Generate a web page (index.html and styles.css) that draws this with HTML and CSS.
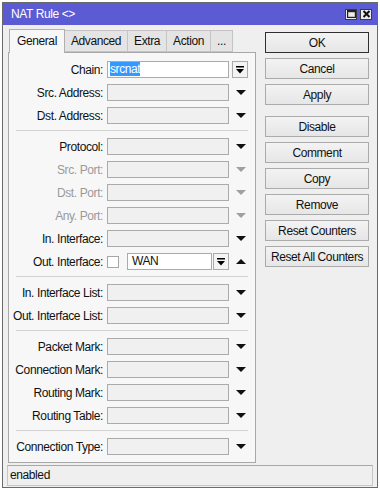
FILE: index.html
```html
<!DOCTYPE html>
<html lang="en">
<head>
  <meta charset="UTF-8" />
  <title>NAT Rule</title>
  <link rel="stylesheet" href="styles.css">
</head>
<body>
  <div class="window">
    <div class="titlebar">
      <span class="title">NAT Rule &lt;&gt;</span>
      <div class="title-btns">
        <span class="tbtn">
          <svg width="9" height="8" viewBox="0 0 9 8"><rect x="0.6" y="0.6" width="7.8" height="6.8" fill="none" stroke="#222" stroke-width="1.2"/><rect x="0.6" y="0.6" width="7.8" height="1.6" fill="#222"/></svg>
        </span>
        <span class="tbtn">
          <svg width="9" height="8" viewBox="0 0 9 8"><path d="M1.5 1 7.5 7M7.5 1 1.5 7" stroke="#111" stroke-width="2"/></svg>
        </span>
      </div>
    </div>

    <div class="content">
      <div class="main">
        <!-- Tabs -->
        <div class="tabs">
          <span class="tab active">General</span>
          <span class="tab">Advanced</span>
          <span class="tab">Extra</span>
          <span class="tab">Action</span>
          <span class="tab">...</span>
        </div>

        <div class="panel">
          <div class="group">
            <div class="row">
              <label>Chain:</label>
              <div class="field"><span class="input white"><span class="sel">srcnat</span></span></div>
              <span class="trail"><span class="dd">
                <svg width="8" height="8" viewBox="0 0 8 8"><rect x="0" y="0" width="8" height="1.5"/><path d="M0 3h8L4 7.5z"/></svg>
              </span></span>
            </div>
            <div class="row">
              <label>Src. Address:</label>
              <div class="field"><span class="input"></span></div>
              <span class="trail"><span class="arrow down"></span></span>
            </div>
            <div class="row">
              <label>Dst. Address:</label>
              <div class="field"><span class="input"></span></div>
              <span class="trail"><span class="arrow down"></span></span>
            </div>
          </div>

          <div class="group">
            <div class="row">
              <label>Protocol:</label>
              <div class="field"><span class="input"></span></div>
              <span class="trail"><span class="arrow down"></span></span>
            </div>
            <div class="row off">
              <label>Src. Port:</label>
              <div class="field"><span class="input"></span></div>
              <span class="trail"><span class="arrow down"></span></span>
            </div>
            <div class="row off">
              <label>Dst. Port:</label>
              <div class="field"><span class="input"></span></div>
              <span class="trail"><span class="arrow down"></span></span>
            </div>
            <div class="row off">
              <label>Any. Port:</label>
              <div class="field"><span class="input"></span></div>
              <span class="trail"><span class="arrow down"></span></span>
            </div>
            <div class="row">
              <label>In. Interface:</label>
              <div class="field"><span class="input"></span></div>
              <span class="trail"><span class="arrow down"></span></span>
            </div>
            <div class="row">
              <label>Out. Interface:</label>
              <div class="field">
                <span class="check"></span>
                <span class="input white short">WAN</span>
                <span class="dd">
                  <svg width="8" height="8" viewBox="0 0 8 8"><rect x="0" y="0" width="8" height="1.5"/><path d="M0 3h8L4 7.5z"/></svg>
                </span>
              </div>
              <span class="trail"><span class="arrow up"></span></span>
            </div>
          </div>

          <div class="group">
            <div class="row">
              <label>In. Interface List:</label>
              <div class="field"><span class="input"></span></div>
              <span class="trail"><span class="arrow down"></span></span>
            </div>
            <div class="row">
              <label>Out. Interface List:</label>
              <div class="field"><span class="input"></span></div>
              <span class="trail"><span class="arrow down"></span></span>
            </div>
          </div>

          <div class="group">
            <div class="row">
              <label>Packet Mark:</label>
              <div class="field"><span class="input"></span></div>
              <span class="trail"><span class="arrow down"></span></span>
            </div>
            <div class="row">
              <label>Connection Mark:</label>
              <div class="field"><span class="input"></span></div>
              <span class="trail"><span class="arrow down"></span></span>
            </div>
            <div class="row">
              <label>Routing Mark:</label>
              <div class="field"><span class="input"></span></div>
              <span class="trail"><span class="arrow down"></span></span>
            </div>
            <div class="row">
              <label>Routing Table:</label>
              <div class="field"><span class="input"></span></div>
              <span class="trail"><span class="arrow down"></span></span>
            </div>
          </div>

          <div class="group">
            <div class="row">
              <label>Connection Type:</label>
              <div class="field"><span class="input"></span></div>
              <span class="trail"><span class="arrow down"></span></span>
            </div>
          </div>
        </div>
      </div>

      <!-- Botões -->
      <div class="side">
        <button class="btn default">OK</button>
        <button class="btn">Cancel</button>
        <button class="btn spaced">Apply</button>
        <button class="btn">Disable</button>
        <button class="btn">Comment</button>
        <button class="btn">Copy</button>
        <button class="btn">Remove</button>
        <button class="btn">Reset Counters</button>
        <button class="btn">Reset All Counters</button>
      </div>
    </div>

    <div class="status">enabled</div>
  </div>
</body>
</html>
```

FILE: styles.css
```css
/* Reset */
*, *::before, *::after {
  box-sizing: border-box;
}

body {
  margin: 0;
  background: #fff;
  font-family: "Liberation Sans", Arial, sans-serif;
  font-size: 12px;
  letter-spacing: -0.4px;
  color: #111;
}

.window {
  margin: 2px;
  width: 376px;
  border: 1px solid #6a6a6a;
  background: #efefef;
  display: flex;
  flex-direction: column;
}

/* Barra de título */
.titlebar {
  height: 22px;
  background: #5b5bd3;
  color: #fff;
  display: flex;
  align-items: center;
  justify-content: space-between;
  padding: 0 5px 0 8px;
}

.title-btns {
  display: flex;
  gap: 3px;
}

.tbtn {
  width: 12px;
  height: 11px;
  background: #ececec;
  border: 1px solid #3a3a3a;
  display: flex;
  align-items: center;
  justify-content: center;
}

.content {
  display: flex;
  padding: 4px 0 0 5px;
}

.main {
  width: 248px;
}

/* Abas */
.tabs {
  display: flex;
  align-items: flex-end;
  height: 23px;
  padding-left: 1px;
}

.tab {
  height: 22px;
  padding: 0 6px;
  line-height: 21px;
  background: #e4e4e4;
  border: 1px solid #c4c4c4;
  border-left: none;
  color: #111;
}

.tab.active {
  height: 24px;
  line-height: 22px;
  padding: 0 7px;
  background: #f7f7f7;
  border: 1px solid #b0b0b0;
  border-bottom: none;
  margin-bottom: -1px;
  position: relative;
  z-index: 1;
}

.panel {
  background: #f7f7f7;
  border: 1px solid #a8a8a8;
  padding: 8px 0 7px;
}

.group {
  display: flex;
  flex-direction: column;
  gap: 6px;
}

.group + .group {
  margin: 6px 7px 0;
  padding-top: 7px;
  border-top: 1px solid #d2d2d2;
}

.group + .group .row {
  margin: 0 -7px;
}

.row {
  display: flex;
  align-items: center;
  height: 17px;
}

.row label {
  width: 95px;
  text-align: right;
  padding-right: 1px;
  margin-right: 3px;
  white-space: nowrap;
}

.field {
  width: 122px;
  height: 17px;
  display: flex;
  align-items: center;
}

.input {
  flex: 1;
  height: 17px;
  background: #f0f0f0;
  border: 1px solid #ababab;
  line-height: 15px;
  padding-left: 2px;
}

.input.white {
  background: #fff;
}

.input.short {
  flex: none;
  width: 85px;
  margin-left: 8px;
  padding-left: 4px;
}

.sel {
  background: #3399ff;
  color: #fff;
}

.check {
  width: 12px;
  height: 12px;
  background: #fff;
  border: 1px solid #a6a6a6;
}

.dd {
  width: 16px;
  height: 17px;
  background: #f4f4f4;
  border: 1px solid #ababab;
  display: flex;
  align-items: center;
  justify-content: center;
  margin-left: 1px;
}

.trail {
  width: 19px;
  margin-left: 2px;
  display: flex;
  justify-content: center;
}

.trail .dd {
  margin-left: -2px;
}

.arrow {
  width: 0;
  height: 0;
  border-left: 5px solid transparent;
  border-right: 5px solid transparent;
}

.arrow.down {
  border-top: 5px solid #111;
}

.arrow.up {
  border-bottom: 5px solid #111;
}

.row.off label {
  color: #9a9a9a;
}

.row.off .arrow.down {
  border-top-color: #a0a0a0;
}

/* Botões laterais */
.side {
  width: 104px;
  margin-left: 9px;
  padding-top: 3px;
  display: flex;
  flex-direction: column;
  gap: 5px;
}

.btn {
  height: 21px;
  padding: 0;
  font: inherit;
  letter-spacing: inherit;
  color: #111;
  white-space: nowrap;
  background: linear-gradient(#f3f3f3, #e6e6e6);
  border: 1px solid #ababab;
}

.btn.default {
  border-color: #303030;
}

.btn.spaced {
  margin-bottom: 6px;
}

/* Barra de status */
.status {
  margin: 2px 4px 1px 4px;
  height: 21px;
  border: 1px solid #c6c6c6;
  border-top-color: #a8a8a8;
  line-height: 19px;
  padding-left: 2px;
}
```
